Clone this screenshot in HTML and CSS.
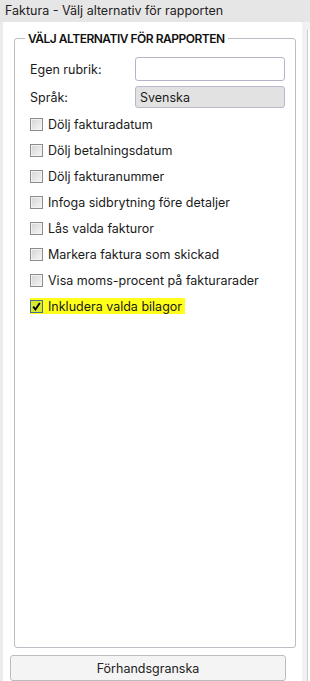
FILE: index.html
```html
<!DOCTYPE html>
<html lang="sv">
<head>
    <meta charset="UTF-8">
    <meta name="viewport" content="width=device-width, initial-scale=1.0">
    <title>Faktura - Välj alternativ för rapporten</title>
    <link rel="stylesheet" href="styles.css">
</head>
<body>
    <div class="titlebar">Faktura - Välj alternativ för rapporten</div>

    <div class="main">
        <div class="panel">
            <fieldset class="options">
                <legend>Välj alternativ för rapporten</legend>

                <div class="content">
                    <div class="field">
                        <label for="rubrik">Egen rubrik:</label>
                        <input type="text" id="rubrik" class="text-input">
                    </div>
                    <div class="field">
                        <label>Språk:</label>
                        <div class="select">Svenska</div>
                    </div>

                    <div class="checks">
                        <div class="check-row"><span class="box"></span>Dölj fakturadatum</div>
                        <div class="check-row"><span class="box"></span>Dölj betalningsdatum</div>
                        <div class="check-row"><span class="box"></span>Dölj fakturanummer</div>
                        <div class="check-row"><span class="box"></span>Infoga sidbrytning före detaljer</div>
                        <div class="check-row"><span class="box"></span>Lås valda fakturor</div>
                        <div class="check-row"><span class="box"></span>Markera faktura som skickad</div>
                        <div class="check-row"><span class="box"></span>Visa moms-procent på fakturarader</div>
                        <div class="check-row">
                            <span class="highlight">
                                <span class="box checked">
                                    <svg width="9" height="9" viewBox="0 0 9 9"><path d="M1.2 4.6 L3.4 7.4 L7.8 1" fill="none" stroke="#000" stroke-width="1.8"/></svg>
                                </span>Inkludera valda bilagor
                            </span>
                        </div>
                    </div>
                </div>
            </fieldset>

            <button class="preview">Förhandsgranska</button>
        </div>
        <div class="side"><div class="side-inner"></div></div>
    </div>
</body>
</html>
```

FILE: styles.css
```css
html, body {
    height: 100%;
}
body {
    margin: 0;
    font-family: Inter, sans-serif;
    font-size: 12.5px;
    color: #1a1a1a;
    background-color: #ebebeb;
    overflow: hidden;
}
.titlebar {
    height: 22px;
    line-height: 21px;
    padding-left: 5px;
    background: #e6e6e6;
    color: #222;
}
.main {
    display: flex;
    height: 659px;
}
.panel {
    margin-left: 3px;
    width: 299px;
    background: white;
    padding: 9px 0 0 7px;
    box-sizing: border-box;
}
.side {
    flex: 1;
    padding-left: 5px;
    background: #f1f1f1;
}
.side-inner {
    height: 100%;
    margin-top: 8px;
    background: white;
    border-left: 1px solid #c8ccd0;
}
.options {
    margin: 0 0 0 4px;
    width: 282px;
    height: 617px;
    box-sizing: border-box;
    border: 1px solid #b8bec4;
    border-radius: 3px;
    padding: 11px 10px 0 0;
}
.options legend {
    font-weight: 600;
    font-size: 12px;
    letter-spacing: -0.5px;
    text-transform: uppercase;
    padding: 0 3px;
    margin-left: 10px;
    color: #111;
}
.content {
    padding-left: 15px;
}
.field {
    display: flex;
    align-items: center;
    margin-bottom: 5px;
}
.field label {
    width: 105px;
}
.text-input {
    width: 150px;
    height: 24px;
    box-sizing: border-box;
    border: 1px solid #b4b4c8;
    border-radius: 3px;
    margin: 0;
}
.select {
    width: 150px;
    height: 22px;
    line-height: 21px;
    box-sizing: border-box;
    padding-left: 4px;
    background: #e2e2e2;
    border: 1px solid #b8b8cc;
    border-radius: 3px;
}
.checks {
    margin-top: -2px;
}
.check-row {
    display: flex;
    align-items: center;
    height: 26px;
}
.box {
    display: inline-block;
    width: 11px;
    height: 11px;
    border: 1px solid #8c8c8c;
    background: linear-gradient(135deg, #d4d4d4, #f6f6f6);
    box-shadow: inset 0 0 0 1px #f2f2f2;
    margin-right: 5px;
    flex-shrink: 0;
    position: relative;
}
.box.checked {
    border-color: #4a6e8a;
    background: #d8e830;
    box-shadow: none;
}
.box svg {
    position: absolute;
    left: 1px;
    top: 1px;
}
.highlight {
    display: flex;
    align-items: center;
    background: #ffff1a;
    height: 16px;
    padding-right: 3px;
}
.preview {
    display: block;
    margin-top: 7px;
    margin-left: 0;
    width: 276px;
    height: 26px;
    background: #f4f4f4;
    border: 1px solid #bcbcbc;
    border-radius: 3px;
    font-family: Inter, sans-serif;
    font-size: 12.5px;
    color: #222;
}
```
